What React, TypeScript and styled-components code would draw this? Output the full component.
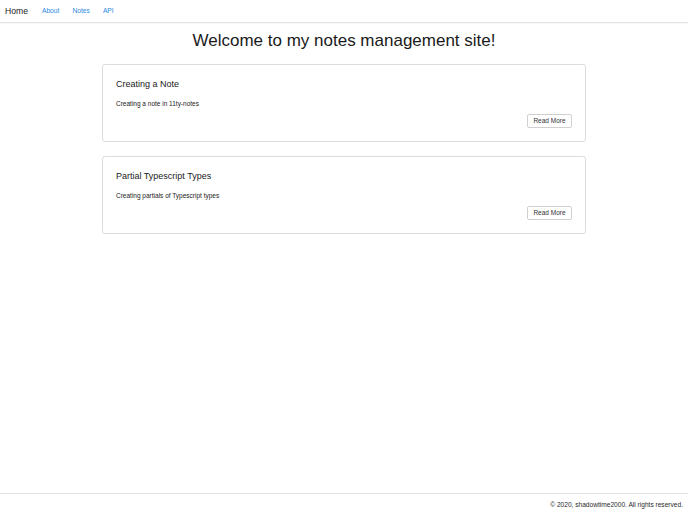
import React from "react";
import styled, { createGlobalStyle } from "styled-components";

const Global = createGlobalStyle`
  html, body { margin: 0; padding: 0; }
  body {
    font-family: "Liberation Sans", Arial, Helvetica, sans-serif;
    color: #1a1a1a;
    background: #fff;
  }
`;

const Page = styled.div`
  display: flex;
  flex-direction: column;
  min-height: 512px;
`;

const NavBar = styled.nav`
  display: flex;
  align-items: center;
  height: 22px;
  padding: 0 5px;
  border-bottom: 1px solid #e3e3e3;
  box-shadow: 0 1px 1px rgba(0, 0, 0, 0.03);
`;

const Brand = styled.a`
  font-size: 8.6px;
  line-height: 12px;
  color: #1a1a1a;
  text-decoration: none;
  margin-right: 14px;
`;

const NavLink = styled.a`
  font-size: 6.7px;
  line-height: 10px;
  color: #2a88e0;
  text-decoration: none;
  margin-right: 13px;
`;

const Main = styled.main`
  flex: 1;
  display: flex;
  flex-direction: column;
  align-items: center;
`;

const Title = styled.h1`
  font-size: 17px;
  font-weight: 400;
  color: #1a1a1a;
  margin: 6px 0 0;
  line-height: 24px;
`;

const CardList = styled.div`
  width: 484px;
  display: flex;
  flex-direction: column;
  gap: 14px;
  margin-top: 11px;
`;

const Card = styled.div`
  border: 1px solid #dcdcdc;
  border-radius: 3px;
  padding: 13px 13px 13px;
  display: flex;
  flex-direction: column;
`;

const CardTitle = styled.h2`
  font-size: 9px;
  font-weight: 400;
  color: #1a1a1a;
  margin: 0;
  line-height: 12px;
`;

const CardText = styled.p`
  font-size: 6.5px;
  color: #1a1a1a;
  margin: 9px 0 0;
  line-height: 10px;
`;

const Actions = styled.div`
  display: flex;
  justify-content: flex-end;
  margin-top: 5px;
`;

const Button = styled.button`
  font-family: inherit;
  font-size: 6.5px;
  color: #333;
  background: #fff;
  border: 1px solid #d0d0d0;
  border-radius: 2px;
  box-sizing: border-box;
  width: 45px;
  height: 14px;
  padding: 0;
  line-height: 12px;
`;

const Footer = styled.footer`
  border-top: 1px solid #e3e3e3;
  padding: 6px 5px 2px;
  display: flex;
  justify-content: flex-end;
  font-size: 6.6px;
  line-height: 10px;
  color: #2a2a2a;
`;

const notes = [
  { title: "Creating a Note", text: "Creating a note in 11ty-notes" },
  { title: "Partial Typescript Types", text: "Creating partials of Typescript types" },
];

export default function App() {
  return (
    <Page>
      <Global />
      <NavBar>
        <Brand href="#">Home</Brand>
        <NavLink href="#">About</NavLink>
        <NavLink href="#">Notes</NavLink>
        <NavLink href="#">API</NavLink>
      </NavBar>
      <Main>
        <Title>Welcome to my notes management site!</Title>
        <CardList>
          {notes.map((n) => (
            <Card key={n.title}>
              <CardTitle>{n.title}</CardTitle>
              <CardText>{n.text}</CardText>
              <Actions>
                <Button>Read More</Button>
              </Actions>
            </Card>
          ))}
        </CardList>
      </Main>
      <Footer>© 2020, shadowtime2000. All rights reserved.</Footer>
    </Page>
  );
}
